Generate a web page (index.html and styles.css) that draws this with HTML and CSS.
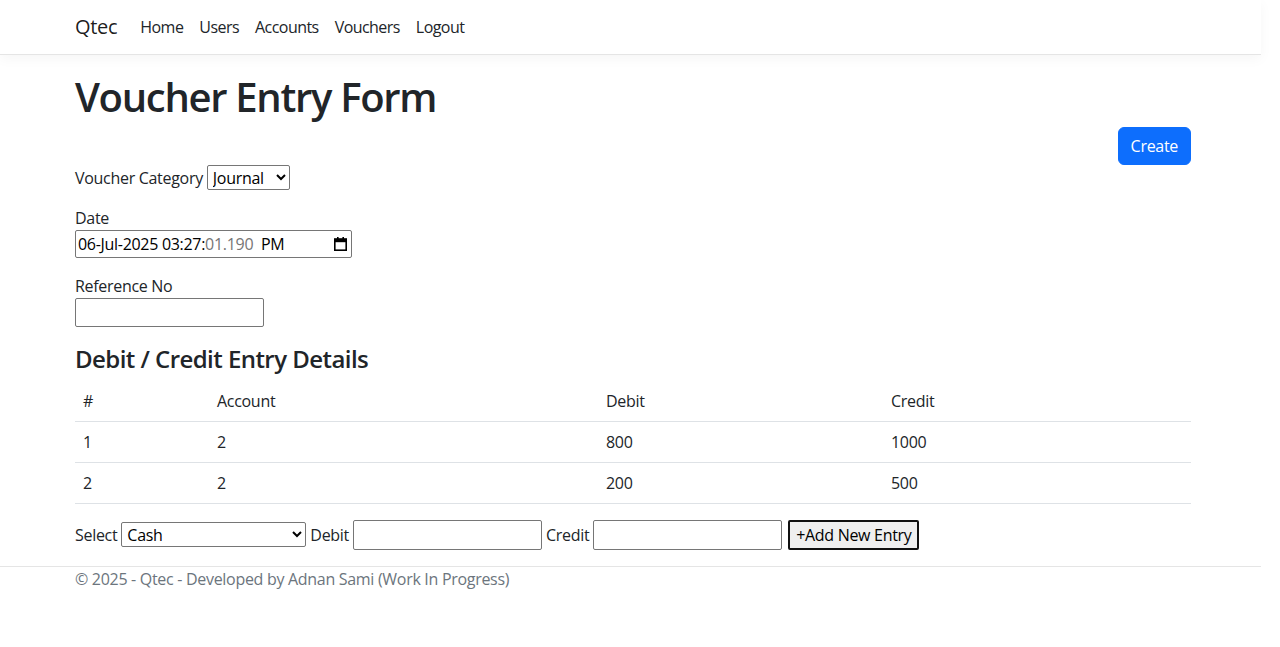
FILE: index.html
```html
<!DOCTYPE html>
<html lang="en">
<head>
<meta charset="utf-8">
<title>Voucher Entry Form - Qtec</title>
<link rel="stylesheet" href="styles.css">
</head>
<body>
<div class="page">
  <header class="navbar">
    <div class="container nav-inner">
      <a class="brand" href="#">Qtec</a>
      <nav class="nav-links">
        <a class="nav-link" href="#">Home</a>
        <a class="nav-link" href="#">Users</a>
        <a class="nav-link" href="#">Accounts</a>
        <a class="nav-link" href="#">Vouchers</a>
        <a class="nav-link" href="#">Logout</a>
      </nav>
    </div>
  </header>

  <main class="container main">
    <h1 class="title">Voucher Entry Form</h1>
    <div class="actions">
      <button class="btn-primary" type="button">Create</button>
    </div>

    <div class="field-inline">
      <label class="lbl">Voucher Category</label>
      <select class="sel sel-cat">
        <option>Journal</option>
        <option>Payment</option>
        <option>Receipt</option>
      </select>
    </div>

    <div class="field">
      <label class="lbl">Date</label>
      <div class="date-box">
        <span class="date-text">06-Jul-2025 03:27:<span class="dim">01.190</span>&nbsp; PM</span>
        <svg class="cal" width="13" height="14" viewBox="0 0 13 14" aria-hidden="true">
          <rect x="3" y="0" width="1.6" height="3" fill="#000"/>
          <rect x="8.4" y="0" width="1.6" height="3" fill="#000"/>
          <rect x="0.8" y="2" width="11.4" height="11.2" fill="none" stroke="#000" stroke-width="1.6"/>
          <rect x="0.8" y="2" width="11.4" height="3.2" fill="#000"/>
        </svg>
      </div>
    </div>

    <div class="field">
      <label class="lbl">Reference No</label>
      <input class="inp inp-ref" type="text">
    </div>

    <h4 class="subtitle">Debit / Credit Entry Details</h4>

    <table class="table">
      <thead>
        <tr><th class="c1">#</th><th class="c2">Account</th><th class="c3">Debit</th><th class="c4">Credit</th></tr>
      </thead>
      <tbody>
        <tr><td>1</td><td>2</td><td>800</td><td>1000</td></tr>
        <tr><td>2</td><td>2</td><td>200</td><td>500</td></tr>
      </tbody>
    </table>

    <div class="entry-row">
      <span>Select</span>
      <select class="sel sel-acc">
        <option>Cash</option>
        <option>Bank</option>
      </select>
      <span>Debit</span>
      <input class="inp inp-amt" type="text">
      <span>Credit</span>
      <input class="inp inp-amt" type="text">
      <button class="btn-add" type="button">+Add New Entry</button>
    </div>
  </main>

  <footer class="footer">
    <div class="container">© 2025 - Qtec - Developed by Adnan Sami (Work In Progress)</div>
  </footer>
</div>
</body>
</html>
```

FILE: styles.css
```css
html, body {
  margin: 0;
  padding: 0;
  background: #fff;
}
body {
  font-family: "Open Sans", "Noto Sans", "Liberation Sans", sans-serif;
  font-size: 16px;
  line-height: 24px;
  letter-spacing: -0.3px;
  color: #212529;
}
.page {
  margin-right: 19px;
}
.container {
  width: 1116px;
  margin-left: 75px;
}
a { text-decoration: none; }

/* navbar */
.navbar {
  height: 54px;
  border-bottom: 1px solid #e5e5e5;
  box-shadow: 0 4px 12px rgba(0, 0, 0, 0.04);
}
.nav-inner {
  display: flex;
  align-items: center;
  height: 54px;
}
.brand {
  font-size: 20px;
  line-height: 30px;
  color: rgba(0, 0, 0, 0.9);
  margin-right: 15px;
}
.nav-links {
  display: flex;
}
.nav-link {
  color: #212529;
  padding: 0 8px;
  line-height: 24px;
  letter-spacing: -0.55px;
}

/* main */
.main {
  padding-top: 18px;
  padding-bottom: 16px;
}
.title {
  margin: 0 0 6px;
  font-size: 40px;
  line-height: 48px;
  font-weight: 600;
  letter-spacing: -1.3px;
}
.actions {
  display: flex;
  justify-content: flex-end;
}
.btn-primary {
  font-family: inherit;
  font-size: 16px;
  letter-spacing: -0.3px;
  line-height: 24px;
  height: 38px;
  padding: 6px 12px;
  color: #fff;
  background: #0d6efd;
  border: 1px solid #0d6efd;
  border-radius: 6px;
}

.field-inline {
  display: flex;
  align-items: center;
  gap: 4px;
  height: 25px;
  margin-bottom: 16px;
}
.field {
  margin-bottom: 16px;
}
.lbl {
  display: block;
}
.sel {
  font-family: inherit;
  font-size: 16px;
  letter-spacing: -0.3px;
  color: #000;
  box-sizing: border-box;
  border: 1px solid #767676;
  border-radius: 2px;
  background: #fff;
  padding: 0 0 0 1px;
}
.sel-cat {
  width: 83px;
  height: 25px;
}
.date-box {
  box-sizing: border-box;
  width: 277px;
  height: 28px;
  border: 1px solid #767676;
  border-radius: 2px;
  display: flex;
  align-items: center;
  justify-content: space-between;
  padding: 0 4px 0 2px;
  color: #000;
}
.date-text { line-height: 24px; }
.dim { color: #767676; }
.cal { display: block; }
.inp {
  font-family: inherit;
  font-size: 16px;
  box-sizing: border-box;
  height: 29px;
  border: 1px solid #767676;
  border-radius: 2px;
  padding: 1px 2px;
  display: block;
}
.inp-ref { width: 189px; }

.subtitle {
  margin: 17px 0 8px;
  font-size: 24px;
  line-height: 29px;
  font-weight: 600;
  letter-spacing: -0.55px;
}

.table {
  width: 100%;
  border-collapse: collapse;
  margin-bottom: 16px;
}
.table th, .table td {
  text-align: left;
  font-weight: 400;
  padding: 8px;
  line-height: 24px;
  border-bottom: 1px solid #dee2e6;
}
.c1 { width: 118px; }
.c2 { width: 373px; }
.c3 { width: 269px; }

.entry-row {
  display: flex;
  align-items: center;
  gap: 4px;
  height: 30px;
}
.entry-row span { line-height: 24px; }
.sel-acc {
  width: 185px;
  height: 25px;
  margin-top: -2px;
}
.inp-amt {
  width: 189px;
  height: 30px;
}
.btn-add {
  font-family: inherit;
  font-size: 16px;
  letter-spacing: -0.3px;
  color: #000;
  height: 30px;
  width: 131px;
  padding: 0 4px;
  margin-left: 2px;
  background: #efefef;
  border: 2px solid #101010;
  border-radius: 2px;
  white-space: nowrap;
}

.footer {
  border-top: 1px solid #e5e5e5;
  color: #6c757d;
  line-height: 24px;
}
```
